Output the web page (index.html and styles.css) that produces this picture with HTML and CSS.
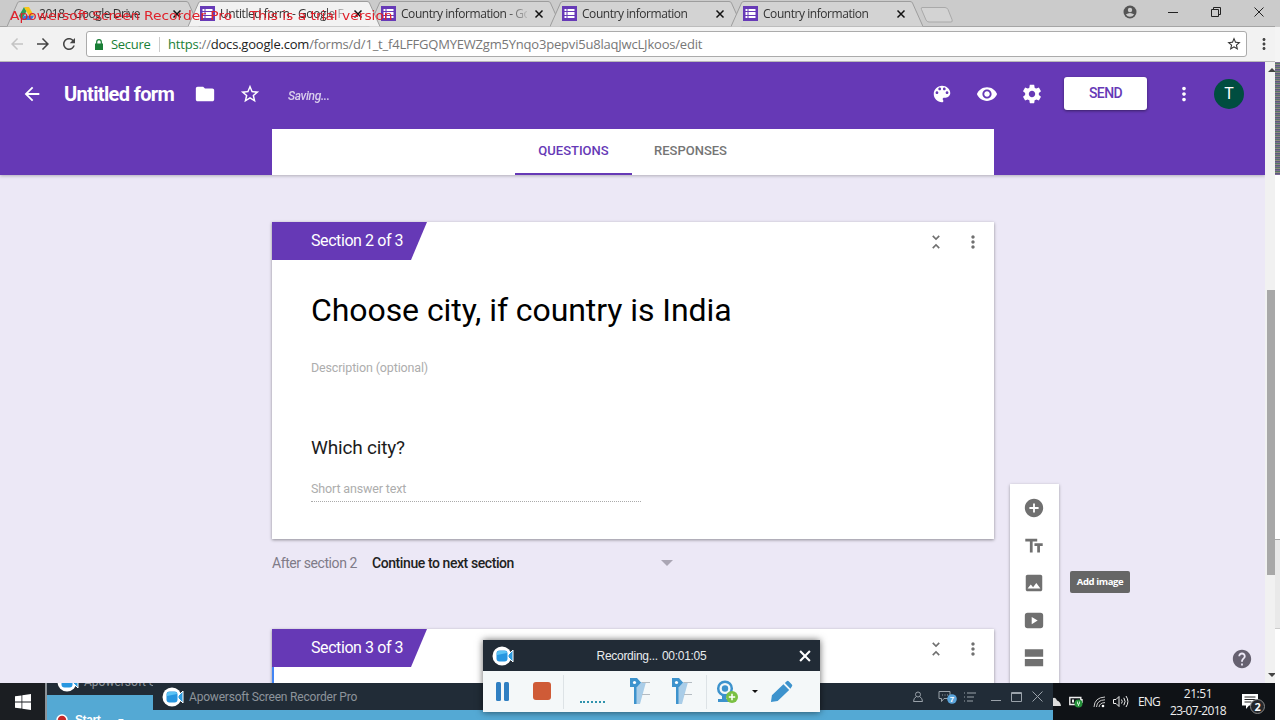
FILE: index.html
```html
<!DOCTYPE html>
<html lang="en">
<head>
<meta charset="utf-8">
<title>Untitled form</title>
<link rel="stylesheet" href="styles.css">
</head>
<body>
<svg class="defs">
	<symbol id="tab" viewBox="0 0 192 27"><path d="M0 26.5L10.5 3Q11 1.5 13 1.5H179Q181 1.5 181.5 3L192 26.5"/></symbol>
	<symbol id="form" viewBox="0 0 15 15"><path fill="#673ab7" d="M0 0h15v15H0z"/><path fill="#fff" d="M2.5 3h10v9h-10z"/><path stroke="#673ab7" d="M2 5.5h11M2 9.5h11M5 3v9"/></symbol>
	<symbol id="x" viewBox="0 0 10 10"><path d="M1.5 1.5l7 7M8.5 1.5l-7 7" fill="none" stroke="currentColor" stroke-width="1.5"/></symbol>
	<symbol id="star" viewBox="0 0 24 24"><path d="M22 9.24l-7.19-.62L12 2 9.19 8.63 2 9.24l5.46 4.73L5.82 21 12 17.27 18.18 21l-1.63-7.03L22 9.24zM12 15.4l-3.76 2.27 1-4.28-3.32-2.88 4.38-.38L12 6.1l1.71 4.04 4.38.38-3.32 2.88 1 4.28L12 15.4z"/></symbol>
	<symbol id="dots" viewBox="0 0 24 24"><path d="M12 8c1.1 0 2-.9 2-2s-.9-2-2-2-2 .9-2 2 .9 2 2 2zm0 2c-1.1 0-2 .9-2 2s.9 2 2 2 2-.9 2-2-.9-2-2-2zm0 6c-1.1 0-2 .9-2 2s.9 2 2 2 2-.9 2-2-.9-2-2-2z"/></symbol>
	<symbol id="arrow" viewBox="0 0 24 24"><path d="M20 11H7.83l5.59-5.59L12 4l-8 8 8 8 1.41-1.41L7.83 13H20v-2z"/></symbol>
	<symbol id="collapse" viewBox="0 0 24 24"><path d="M7.41 18.59L8.83 20 12 16.83 15.17 20l1.41-1.41L12 14l-4.59 4.59zm9.18-13.18L15.17 4 12 7.17 8.83 4 7.41 5.41 12 10l4.59-4.59z"/></symbol>
	<symbol id="cam" viewBox="0 0 22 20"><circle cx="10" cy="10" r="9.5" fill="#fff"/><path d="M16 9l5-5v12l-5-5z" fill="#2c9be0" stroke="#fff"/><rect x="4.5" y="4.5" width="11" height="11" rx="3" fill="#2796e0"/><path d="M5 9V7q0-2 2-2h6q2 0 2 2z" fill="#5bc3f5"/></symbol>
	<symbol id="pin" viewBox="0 0 22 28"><path d="M6 5h10L10 27H6z" fill="#a9cde8"/><path d="M12 5.5h8M12 17.5h8" stroke="#b4bcc2"/><path d="M0 1h7l4 4.5L7 10H0z" fill="#3d93cd"/><circle cx="4.5" cy="5.5" r="1.6" fill="#fff"/><path d="M4 10h2.5v17H4z" fill="#3d93cd"/></symbol>
</svg>

<div class="desk">
	<div class="browser">
		<div class="tabstrip">
			<div class="tab">
				<svg class="shape"><use href="#tab"/></svg>
				<svg class="fav" viewBox="0 0 15 15"><path fill="#2a9d58" d="M5 1l2.5 4.3L2.5 14 0 9.7z"/><path fill="#f5c518" d="M5 1h5l5 8.7h-5z"/><path fill="#3b78e0" d="M5 9.7h10L12.5 14h-10z"/></svg>
				<span class="label">2018 - Google Drive</span>
				<svg class="close"><use href="#x"/></svg>
			</div>
			<div class="tab active">
				<svg class="shape"><use href="#tab"/></svg>
				<svg class="fav"><use href="#form"/></svg>
				<span class="label">Untitled form - Google F</span>
				<svg class="close"><use href="#x"/></svg>
			</div>
			<div class="tab">
				<svg class="shape"><use href="#tab"/></svg>
				<svg class="fav"><use href="#form"/></svg>
				<span class="label">Country information - Go</span>
				<svg class="close"><use href="#x"/></svg>
			</div>
			<div class="tab">
				<svg class="shape"><use href="#tab"/></svg>
				<svg class="fav"><use href="#form"/></svg>
				<span class="label">Country information</span>
				<svg class="close"><use href="#x"/></svg>
			</div>
			<div class="tab">
				<svg class="shape"><use href="#tab"/></svg>
				<svg class="fav"><use href="#form"/></svg>
				<span class="label">Country information</span>
				<svg class="close"><use href="#x"/></svg>
			</div>
			<svg class="newtab" viewBox="0 0 34 18"><path d="M2 1.5h23q2 0 3 2l4 10q1 2.500-1 2.500H9q-2 0-3-2L1.500 3.500q-.8-2 .5-2z"/></svg>
			<div class="winbtns">
				<svg width="14" height="14" viewBox="0 0 14 14"><circle cx="7" cy="7" r="6.5" fill="#555"/><circle cx="7" cy="5" r="2.2" fill="#ccc"/><path d="M2.8 9.5q4.200-3.200 8.400 0-1.700 2.300-4.200 2.300t-4.200-2.300z" fill="#ccc"/></svg>
				<svg width="10" height="10" viewBox="0 0 10 10"><path d="M0 5.5h10" stroke="#222"/></svg>
				<svg width="10" height="10" viewBox="0 0 10 10"><path d="M.5 2.5h7v7h-7zM2.5 2.5v-2h7v7h-2" fill="none" stroke="#222"/></svg>
				<svg width="10" height="10" viewBox="0 0 10 10"><path d="M.5.5l9 9M9.5.5l-9 9" stroke="#222"/></svg>
			</div>
		</div>

		<div class="toolbar">
			<svg class="nav off"><use href="#arrow"/></svg>
			<svg class="nav fwd"><use href="#arrow"/></svg>
			<svg class="nav" viewBox="0 0 24 24"><path d="M17.65 6.35C16.2 4.9 14.21 4 12 4c-4.42 0-7.99 3.58-7.99 8s3.57 8 7.99 8c3.73 0 6.84-2.55 7.73-6h-2.08c-.82 2.33-3.04 4-5.65 4-3.31 0-6-2.69-6-6s2.69-6 6-6c1.66 0 3.14.69 4.22 1.78L13 11h7V4l-2.35 2.35z"/></svg>
			<div class="address">
				<svg class="lock" viewBox="0 0 8 11"><path d="M0 4.5h8V11H0z"/><path d="M1.7 5V3a2.3 2.3 0 0 1 4.6 0v2" fill="none" stroke="#1a7f37" stroke-width="1.2"/></svg>
				<span class="secure">Secure</span>
				<span class="url"><span class="scheme">https</span>://<b>docs.google.com</b>/forms/d/1_t_f4LFFGQMYEWZgm5Ynqo3pepvi5u8laqJwcLJkoos/edit</span>
				<svg class="fave"><use href="#star"/></svg>
			</div>
			<svg class="menu"><use href="#dots"/></svg>
		</div>

		<div class="view">
			<div class="page">
				<div class="head">
					<div class="bar">
						<svg class="icon back"><use href="#arrow"/></svg>
						<span class="name">Untitled form</span>
						<svg class="icon folder" viewBox="0 0 24 24"><path d="M10 4H4c-1.1 0-2 .9-2 2v12c0 1.1.9 2 2 2h16c1.1 0 2-.9 2-2V8c0-1.1-.9-2-2-2h-8l-2-2z"/></svg>
						<svg class="icon starred"><use href="#star"/></svg>
						<span class="saving">Saving...</span>
						<div class="actions">
							<svg class="icon" viewBox="0 0 24 24"><path d="M12 3c-4.97 0-9 4.03-9 9s4.03 9 9 9c.83 0 1.5-.67 1.5-1.5 0-.39-.15-.74-.39-1.01-.23-.26-.38-.61-.38-.99 0-.83.67-1.5 1.5-1.5H16c2.76 0 5-2.24 5-5 0-4.42-4.03-8-9-8zm-5.5 9c-.83 0-1.5-.67-1.5-1.5S5.67 9 6.5 9 8 9.67 8 10.5 7.33 12 6.5 12zm3-4C8.67 8 8 7.33 8 6.5S8.67 5 9.5 5s1.5.67 1.5 1.5S10.33 8 9.5 8zm5 0c-.83 0-1.5-.67-1.5-1.5S13.67 5 14.5 5s1.5.67 1.5 1.5S15.33 8 14.5 8zm3 4c-.83 0-1.5-.67-1.5-1.5S16.67 9 17.5 9s1.5.67 1.5 1.5-.67 1.5-1.5 1.5z"/></svg>
							<svg class="icon" viewBox="0 0 24 24"><path d="M12 4.5C7 4.5 2.73 7.61 1 12c1.73 4.39 6 7.5 11 7.5s9.27-3.11 11-7.5c-1.73-4.39-6-7.5-11-7.5zM12 17c-2.76 0-5-2.24-5-5s2.24-5 5-5 5 2.24 5 5-2.24 5-5 5zm0-8c-1.66 0-3 1.34-3 3s1.34 3 3 3 3-1.34 3-3-1.34-3-3-3z"/></svg>
							<svg class="icon" viewBox="0 0 24 24"><path d="M19.43 12.98c.04-.32.07-.64.07-.98s-.03-.66-.07-.98l2.11-1.65c.19-.15.24-.42.12-.64l-2-3.46c-.12-.22-.39-.3-.61-.22l-2.49 1c-.52-.4-1.08-.73-1.69-.98l-.38-2.65C14.46 2.18 14.25 2 14 2h-4c-.25 0-.46.18-.49.42l-.38 2.65c-.61.25-1.17.59-1.69.98l-2.49-1c-.23-.09-.49 0-.61.22l-2 3.46c-.13.22-.07.49.12.64l2.11 1.65c-.04.32-.07.65-.07.98s.03.66.07.98l-2.11 1.65c-.19.15-.24.42-.12.64l2 3.46c.12.22.39.3.61.22l2.49-1c.52.4 1.08.73 1.69.98l.38 2.65c.03.24.24.42.49.42h4c.25 0 .46-.18.49-.42l.38-2.65c.61-.25 1.17-.59 1.69-.98l2.49 1c.23.09.49 0 .61-.22l2-3.46c.12-.22.07-.49-.12-.64l-2.11-1.65zM12 15.5c-1.93 0-3.5-1.57-3.5-3.5s1.57-3.5 3.5-3.5 3.5 1.57 3.5 3.5-1.57 3.5-3.5 3.5z"/></svg>
							<span class="send">SEND</span>
							<svg class="icon more"><use href="#dots"/></svg>
							<span class="avatar">T</span>
						</div>
					</div>
					<div class="formtabs">
						<span class="on">QUESTIONS</span>
						<span>RESPONSES</span>
					</div>
				</div>

				<div class="column">
					<div class="card">
						<div class="cardhead">
							<div class="section"><span>Section 2 of 3</span></div>
							<svg class="cardicon"><use href="#collapse"/></svg>
							<svg class="cardicon"><use href="#dots"/></svg>
						</div>
						<div class="title">Choose city, if country is India</div>
						<div class="desc">Description (optional)</div>
						<div class="question">Which city?</div>
						<div class="answer">Short answer text</div>
					</div>
					<div class="after">
						<span class="afterlabel">After section 2</span>
						<span class="goto">Continue to next section</span>
						<i class="caret"></i>
					</div>
					<div class="card next">
						<div class="cardhead">
							<div class="section"><span>Section 3 of 3</span></div>
							<svg class="cardicon"><use href="#collapse"/></svg>
							<svg class="cardicon"><use href="#dots"/></svg>
						</div>
						<div class="selected"></div>
					</div>
				</div>

				<div class="tools">
					<svg viewBox="0 0 24 24"><path d="M12 2C6.48 2 2 6.48 2 12s4.48 10 10 10 10-4.48 10-10S17.52 2 12 2zm5 11h-4v4h-2v-4H7v-2h4V7h2v4h4v2z"/></svg>
					<svg viewBox="0 0 24 24"><path d="M2.5 4v3h5v12h3V7h5V4h-13zm19 5h-9v3h3v7h3v-7h3V9z"/></svg>
					<svg viewBox="0 0 24 24"><path d="M21 19V5c0-1.1-.9-2-2-2H5c-1.1 0-2 .9-2 2v14c0 1.1.9 2 2 2h14c1.1 0 2-.9 2-2zM8.5 13.5l2.5 3.01L14.5 12l4.5 6H5l3.5-4.5z"/></svg>
					<svg viewBox="0 0 24 24"><path d="M5 3h14q3 0 3 3v11q0 3-3 3H5q-3 0-3-3V6q0-3 3-3zm4.5 4.5v8l6.5-4z"/></svg>
					<svg viewBox="0 0 24 24"><path d="M2 2.5h20v8H2zM2 13h20v8H2z"/></svg>
				</div>
				<div class="tip">Add image</div>
				<svg class="help" viewBox="0 0 24 24"><path d="M12 2C6.48 2 2 6.48 2 12s4.48 10 10 10 10-4.48 10-10S17.52 2 12 2zm1 17h-2v-2h2v2zm2.07-7.75l-.9.92C13.45 12.9 13 13.5 13 15h-2v-.5c0-1.1.45-2.1 1.17-2.83l1.24-1.26c.37-.36.59-.86.59-1.41 0-1.1-.9-2-2-2s-2 .9-2 2H8c0-2.21 1.79-4 4-4s4 1.79 4 4c0 .88-.36 1.68-.93 2.25z"/></svg>
			</div>
			<div class="scroll">
				<i class="up"></i>
				<i class="thumb"></i>
				<i class="down"></i>
			</div>
		</div>
	</div>
	<div class="edge">
		<div class="edgetop"></div>
		<div class="noise"></div>
		<div class="sheet"></div>
		<div class="sheet grey"></div>
		<div class="sheet last"></div>
	</div>
</div>

<div class="taskbar">
	<div class="start">
		<svg width="16" height="16" viewBox="0 0 16 16" fill="#fff"><path d="M0 2.3L6.5 1.4v6.2H0zM7.3 1.3L16 0v7.6H7.3zM0 8.4h6.5v6.2L0 13.7zM7.3 8.4H16V16l-8.7-1.3z"/></svg>
	</div>
	<div class="app small">
		<div class="apptitle"><svg class="cam"><use href="#cam"/></svg><span>Apowersoft S</span></div>
		<div class="appbody"><svg width="12" height="12" viewBox="0 0 12 12"><circle cx="6" cy="6" r="5" fill="#c62828" stroke="#fff" stroke-width="1.5"/></svg><b>Start</b><i class="wcaret"></i></div>
	</div>
	<div class="app large">
		<div class="apptitle">
			<svg class="cam"><use href="#cam"/></svg><span>Apowersoft Screen Recorder Pro</span>
			<div class="appbtns">
				<svg width="10" height="12" viewBox="0 0 10 12"><circle cx="5" cy="3.5" r="2.5"/><path d="M3.5 5.5Q.5 7 .5 10.5h9Q9.5 7 6.5 5.5"/></svg>
				<svg width="20" height="14" viewBox="0 0 20 14"><path d="M1 1.5h11v7H6l-2.5 3v-3H1z"/><path d="M4 5h1M6.5 5h1M9 5h1"/><circle cx="14" cy="9" r="4.8" fill="#5aa5dc" stroke="none"/><text x="11.8" y="11.9" class="count">7</text></svg>
				<svg width="12" height="10" viewBox="0 0 12 10"><path d="M0 1h1M3 1h9M0 5h1M3 5h7M0 9h1M3 9h6"/></svg>
				<svg width="10" height="10" viewBox="0 0 10 10"><path d="M0 8.5h10"/></svg>
				<svg width="11" height="10" viewBox="0 0 11 10"><path d="M.5.5h10v9H.5zM.5 1.5h10"/></svg>
				<svg width="11" height="11" viewBox="0 0 11 11"><path d="M.5.5l10 10M10.5.5l-10 10"/></svg>
			</div>
		</div>
	</div>
	<div class="tray">
		<svg width="8" height="10" viewBox="0 0 8 10" fill="#ddd"><path d="M0 1q3-1 4 2.5Q7.5 4.5 8 9H0z"/></svg>
		<svg class="battery" width="14" height="13" viewBox="0 0 14 13"><path d="M.8 2.5h11v7H.8zM13 4v4" fill="none" stroke="#eee" stroke-width="1.4"/><path d="M3 4.5h2v3H3z" fill="#eee"/><circle cx="9.5" cy="8.5" r="4" fill="#26923b"/><path d="M8.5 6.5v2.5h2V6.5M9.5 9v2" fill="none" stroke="#bfe8c5"/></svg>
		<svg class="wifi" width="13" height="12" viewBox="0 0 13 12" fill="none" stroke="#ccc"><path d="M1 11Q1.5 1.5 12 1M3.5 11Q4 4 12 3.8M6 11Q6.5 6.8 12 6.6"/><circle cx="10" cy="10" r="1.3" fill="#fff" stroke="none"/></svg>
		<svg class="sound" width="16" height="13" viewBox="0 0 16 13" fill="none" stroke="#eee"><path d="M.5 4.5H3l3-3v10l-3-3H.5zM8.5 4.5q1.5 2 0 4M10.8 2.8q2.6 3.7 0 7.4M13 1q3.8 5.5 0 11"/></svg>
		<span class="lang">ENG</span>
		<div class="clock"><span class="time">21:51</span><span>23-07-2018</span></div>
		<svg class="notes" width="24" height="22" viewBox="0 0 24 22"><path d="M0 1h16v11.5H7L4 16v-3.5H0z" fill="#fff"/><path d="M2.5 4h11M2.5 6.5h11M2.5 9h7" stroke="#222"/><circle cx="15.5" cy="13.5" r="7" fill="#25272b" stroke="#888"/><text x="12.5" y="17.7" class="unread">2</text></svg>
	</div>
</div>

<div class="recorder">
	<div class="rectitle">
		<svg class="cam"><use href="#cam"/></svg>
		<span>Recording... 00:01:05</span>
		<svg class="recclose"><use href="#x"/></svg>
	</div>
	<div class="recbody">
		<svg class="pause" viewBox="0 0 14 19" fill="#2f7fc2"><rect width="5" height="19" rx="1.5"/><rect x="8" width="5" height="19" rx="1.5"/></svg>
		<i class="stop"></i>
		<i class="rule"></i>
		<i class="wave"></i>
		<svg class="pin"><use href="#pin"/></svg>
		<svg class="pin"><use href="#pin"/></svg>
		<i class="rule second"></i>
		<svg class="webcam" viewBox="0 0 24 24"><circle cx="10" cy="8.5" r="6.8" fill="none" stroke="#3d93cd" stroke-width="2.5"/><circle cx="10" cy="8.5" r="3.2" fill="#3d93cd"/><path d="M7 15h4v4h5v3H3v-3h4z" fill="#3d93cd"/><circle cx="17" cy="17" r="6" fill="#7ac043"/><path d="M17 13.8v6.4M13.8 17h6.4" stroke="#fff" stroke-width="1.5"/></svg>
		<i class="bcaret"></i>
		<svg class="pencil" viewBox="0 0 24 24" fill="#3d93cd"><path d="M1 23l1-7L14 4.5l6 6L8 22zM15.5 3l2-1.8q1-.9 2 0l3.3 3.5q1 1 0 2L21.3 9z"/></svg>
	</div>
</div>

<div class="watermark">Apowersoft Screen Recorder Pro &nbsp;&nbsp; This is a trial version</div>
</body>
</html>
```
FILE: styles.css
```css
html,body{
	margin:0;
	padding:0;
	width:1280px;
	height:720px;
	overflow:hidden;
	font-family:Roboto,"Liberation Sans",sans-serif;
	position:relative;
}
i{
	display:block;
	flex:none;
}
svg{
	display:block;
	flex:none;
}
.defs{
	position:absolute;
	width:0;
	height:0;
}
.desk{
	display:flex;
	height:683px;
}
.browser{
	width:1275px;
	display:flex;
	flex-direction:column;
}

/* tab strip */
.tabstrip{
	height:27px;
	box-sizing:border-box;
	padding-left:7px;
	display:flex;
	background:#cbcbcb;
	border-bottom:1px solid #a5a5a5;
}
.tab{
	position:relative;
	width:181px;
	height:27px;
	box-sizing:border-box;
	padding-left:12px;
	display:flex;
	align-items:center;
	flex:none;
	color:#333;
}
.tab .shape{
	position:absolute;
	left:0;
	top:0;
	width:192px;
	height:27px;
	fill:#d3d3d3;
	stroke:#9d9d9d;
}
.tab.active{
	z-index:1;
}
.tab.active .shape{
	fill:#f2f2f2;
}
.fav{
	position:relative;
	width:15px;
	height:15px;
}
.label{
	position:relative;
	margin-left:5px;
	width:126px;
	overflow:hidden;
	white-space:nowrap;
	font:12px/20px "Open Sans","Noto Sans",sans-serif;
	letter-spacing:-.45px;
	-webkit-mask-image:linear-gradient(90deg,#000 105px,transparent 130px);
	mask-image:linear-gradient(90deg,#000 105px,transparent 130px);
}
.close{
	position:relative;
	width:10px;
	height:10px;
	margin-left:7px;
	color:#111;
}
.newtab{
	width:34px;
	height:18px;
	margin:6px 0 0 8px;
	fill:#d3d3d3;
	stroke:#a9a9a9;
}
.winbtns{
	margin-left:auto;
	display:flex;
	align-items:center;
	gap:33px;
	padding-right:11px;
	height:24px;
}
.winbtns svg:first-child{
	margin-right:-2px;
}

/* address row */
.toolbar{
	height:35px;
	box-sizing:border-box;
	display:flex;
	align-items:center;
	background:#f2f2f2;
	border-bottom:1px solid #b9b9b9;
	padding-left:8px;
}
.nav{
	width:18px;
	height:18px;
	margin-right:8px;
	fill:#444;
}
.nav.off{
	fill:#c4c4c4;
}
.nav.fwd{
	transform:scaleX(-1);
}
.address{
	width:1161px;
	height:26px;
	box-sizing:border-box;
	border:1px solid #ababab;
	border-radius:3px;
	background:#fff;
	display:flex;
	align-items:center;
	padding:0 4px 0 8px;
	font:13px/24px "Open Sans","Noto Sans",sans-serif;
}
.lock{
	width:8px;
	height:11px;
	fill:#1a7f37;
}
.secure{
	margin-left:8px;
	width:48px;
	color:#1a7f37;
	letter-spacing:-.3px;
}
.url{
	height:15px;
	line-height:15px;
	border-left:1px solid #ccc;
	padding-left:8px;
	color:#777;
	letter-spacing:-.2px;
	white-space:nowrap;
}
.scheme{
	color:#1a7f37;
}
.url b{
	font-weight:400;
	color:#222;
}
.fave{
	width:16px;
	height:16px;
	margin-left:auto;
	fill:#333;
}
.menu{
	width:18px;
	height:18px;
	margin-left:8px;
	fill:#444;
}

/* google forms page */
.view{
	height:621px;
	display:flex;
}
.page{
	position:relative;
	width:1265px;
	height:621px;
	overflow:hidden;
	background:#ece8f6;
}
.head{
	height:113px;
	background:#6639b6;
	box-shadow:0 1px 3px rgba(0,0,0,.25);
}
.bar{
	height:67px;
	box-sizing:border-box;
	padding:0 21px 4px;
	display:flex;
	align-items:center;
	color:#fff;
}
.icon{
	width:22px;
	height:22px;
	fill:#fff;
}
.name{
	margin-left:21px;
	width:110px;
	font-size:20px;
	font-weight:700;
	letter-spacing:-.65px;
	white-space:nowrap;
	padding-top:1px;
}
.folder{
	margin-left:20px;
}
.starred{
	margin-left:23px;
}
.saving{
	margin:4px 0 0 27px;
	font-size:12px;
	font-weight:500;
	font-style:italic;
	letter-spacing:-.35px;
	opacity:.75;
}
.actions{
	margin-left:auto;
	display:flex;
	align-items:center;
	gap:23px;
}
.send{
	width:83px;
	height:33px;
	margin-left:-2px;
	border-radius:3px;
	background:#fff;
	box-shadow:0 1px 3px rgba(0,0,0,.45);
	color:#6639b6;
	font-size:14px;
	font-weight:500;
	letter-spacing:-.6px;
	line-height:33px;
	text-align:center;
}
.more{
	margin-left:3px;
}
.avatar{
	width:30px;
	height:30px;
	margin-left:-4px;
	border-radius:50%;
	background:#004d40;
	font-size:16px;
	line-height:30px;
	text-align:center;
}
.formtabs{
	width:722px;
	height:46px;
	margin-left:272px;
	background:#fff;
	display:flex;
	justify-content:center;
	box-sizing:border-box;
	padding-right:2px;
}
.formtabs span{
	width:117px;
	box-sizing:border-box;
	border-bottom:2px solid transparent;
	color:#757575;
	font-size:13px;
	font-weight:500;
	line-height:44px;
	text-align:center;
}
.formtabs .on{
	color:#6639b6;
	border-bottom-color:#6639b6;
}
.column{
	width:722px;
	margin-left:272px;
	padding-top:47px;
}
.card{
	height:317px;
	background:#fff;
	box-shadow:0 1px 3px rgba(0,0,0,.4);
}
.cardhead{
	height:38px;
	display:flex;
	align-items:center;
	padding-right:11px;
}
.section{
	width:155px;
	height:38px;
	margin-right:auto;
	background:#6639b6;
	clip-path:polygon(0 0,100% 0,139px 100%,0 100%);
	color:#fff;
	font-size:16px;
	letter-spacing:-.42px;
	line-height:37px;
	white-space:nowrap;
}
.section span{
	margin-left:39px;
}
.cardicon{
	width:20px;
	height:20px;
	margin:1px 0 0 17px;
	fill:#707070;
}
.title{
	margin:28px 39px 0;
	font-size:32px;
	letter-spacing:-.07px;
	line-height:44px;
	white-space:nowrap;
}
.desc{
	margin:26px 39px 0;
	font-size:12.5px;
	letter-spacing:-.14px;
	line-height:20px;
	color:#adadad;
}
.question{
	margin:56px 39px 0;
	font-size:19px;
	letter-spacing:-.18px;
	line-height:28px;
	color:#1c1c1c;
}
.answer{
	width:330px;
	height:23px;
	margin:16px 39px 0;
	border-bottom:1px dotted #aaa;
	font-size:12.5px;
	letter-spacing:-.14px;
	line-height:22px;
	color:#adadad;
}
.after{
	height:90px;
	box-sizing:border-box;
	padding-top:14px;
	display:flex;
	font-size:14px;
	letter-spacing:-.42px;
	line-height:20px;
}
.afterlabel{
	width:100px;
	color:#7f7b88;
}
.goto{
	width:289px;
	color:#222;
	font-weight:500;
}
.caret{
	width:0;
	height:0;
	margin-top:7px;
	border:6px solid transparent;
	border-top-color:#aaa6b4;
	border-bottom:0;
}
.selected{
	width:2px;
	height:30px;
	background:#4285f4;
}
.tools{
	position:absolute;
	left:1010px;
	top:422px;
	width:49px;
	height:210px;
	box-sizing:border-box;
	padding:13px 1px 0 0;
	display:flex;
	flex-direction:column;
	align-items:center;
	gap:15.5px;
	background:#fff;
	box-shadow:0 1px 3px rgba(0,0,0,.35);
}
.tools svg{
	width:22px;
	height:22px;
	fill:#707070;
	fill-rule:evenodd;
}
.tip{
	position:absolute;
	left:1070px;
	top:509px;
	width:60px;
	height:22px;
	border-radius:2px;
	background:#666;
	color:#fff;
	font:700 9.5px/21px "Open Sans",sans-serif;
	letter-spacing:-.4px;
	text-align:center;
}
.help{
	position:absolute;
	left:1231px;
	top:586px;
	width:22px;
	height:22px;
	fill:#666170;
}
.scroll{
	width:10px;
	height:621px;
	box-sizing:border-box;
	padding:6px 0;
	background:#f1f1f1;
	display:flex;
	flex-direction:column;
	align-items:flex-end;
	overflow:hidden;
}
.up,.down{
	width:0;
	height:0;
	margin-right:-1px;
	border:4px solid transparent;
}
.up{
	border-top:0;
	border-bottom-color:#444;
}
.down{
	margin-top:auto;
	border-bottom:0;
	border-top-color:#444;
}
.thumb{
	width:8px;
	height:285px;
	margin-top:218px;
	background:#a8a8a8;
}

/* strip of the windows behind the browser */
.edge{
	width:5px;
	background:#fff;
}
.edgetop{
	height:62px;
	background:linear-gradient(#cbcbcb 27px,#f4f4f4 27px);
}
.noise{
	height:113px;
	background:repeating-linear-gradient(#7d6a94 0 1px,#557a62 1px 2px,#8f8a7c 2px 3px,#5b5980 3px 4px);
}
.sheet{
	height:364px;
	border-bottom:1px solid #aaa;
	background:#fff;
}
.sheet.grey{
	height:88px;
	background:#e9e9e9;
	border-color:#ccc;
}
.sheet.last{
	height:54px;
	border:0;
}

/* windows taskbar with the app windows over it */
.taskbar{
	height:37px;
	width:1275px;
	display:flex;
	background:#0f1216;
	overflow:hidden;
}
.start{
	width:45px;
	border-right:2px solid #8c9297;
	background:#1b1e22;
	display:flex;
	align-items:center;
	justify-content:center;
}
.app{
	background:#54a9d4;
	overflow:hidden;
	font-size:12px;
}
.apptitle{
	display:flex;
	align-items:center;
	background:#212c37;
	color:#8d949b;
	white-space:nowrap;
}
.cam{
	width:22px;
	height:20px;
}
.small{
	width:106px;
}
.small .apptitle{
	height:12px;
	padding-left:10px;
	overflow:hidden;
}
.small .cam{
	margin-top:-14px;
}
.small span{
	margin:-14px 0 0 5px;
}
.appbody{
	display:flex;
	align-items:center;
	padding:19px 0 0 9px;
	height:12px;
	color:#fff;
	font-family:"Liberation Sans",sans-serif;
}
.appbody b{
	margin-left:7px;
	letter-spacing:-.4px;
}
.wcaret{
	margin-left:18px;
	border:3px solid transparent;
	border-top-color:#fff;
	border-bottom:0;
}
.large{
	width:900px;
}
.large .apptitle{
	height:27px;
	padding-left:9px;
}
.large .apptitle span{
	margin-left:5px;
	letter-spacing:-.2px;
}
.appbtns{
	margin-left:auto;
	display:flex;
	align-items:center;
	gap:10px;
	padding-right:10px;
	fill:none;
	stroke:#9aa2aa;
}
.appbtns svg:nth-child(2){
	margin-left:5px;
	margin-right:-4px;
}
.appbtns svg:nth-child(3){
	margin-right:5px;
}
.count{
	font:700 8px "Liberation Sans",sans-serif;
	fill:#fff;
	stroke:none;
}
.tray{
	flex:1;
	display:flex;
	align-items:center;
	color:#eee;
	font:12px/17px "Open Sans","Noto Sans",sans-serif;
}
.battery{
	margin-left:8px;
}
.wifi{
	margin-left:10px;
}
.sound{
	margin-left:7px;
}
.lang{
	width:22px;
	margin-left:9px;
	letter-spacing:-.9px;
}
.clock{
	width:56px;
	margin-left:10px;
	display:flex;
	flex-direction:column;
	align-items:center;
	letter-spacing:-.65px;
	white-space:nowrap;
}
.time{
	letter-spacing:-.4px;
}
.notes{
	margin:4px 0 0 16px;
}
.unread{
	font:700 11px "Open Sans",sans-serif;
	fill:#fff;
}

/* floating recorder panel */
.recorder{
	position:absolute;
	left:483px;
	top:640px;
	width:337px;
	height:72px;
	background:#f4f8f9;
	box-shadow:0 0 7px rgba(0,0,0,.6);
	z-index:2;
}
.rectitle{
	height:31px;
	padding:0 8px 0 9px;
	display:flex;
	align-items:center;
	justify-content:space-between;
	background:#212b36;
	color:#e9ecee;
	font:12px "Liberation Sans",sans-serif;
}
.rectitle span{
	margin-left:-10px;
	letter-spacing:-.28px;
	font-size:12px;
	width:109px;
	white-space:nowrap;
	word-spacing:1px;
}
.recclose{
	width:14px;
	height:14px;
	color:#fff;
}
.recbody{
	height:41px;
	display:flex;
	align-items:center;
}
.pause{
	width:14px;
	height:19px;
	margin:-1px 0 0 13px;
}
.stop{
	width:18px;
	height:18px;
	margin:-1px 0 0 23px;
	border-radius:3px;
	background:#cf5b37;
}
.rule{
	width:1px;
	height:34px;
	margin-left:12px;
	background:#dde3e6;
}
.wave{
	width:25px;
	margin:20px 0 0 16px;
	border-top:2px dotted #2f93ad;
}
.pin{
	width:22px;
	height:28px;
	margin:-2px 0 0 25px;
}
.pin + .pin{
	margin-left:20px;
}
.second{
	margin-left:12px;
}
.webcam{
	width:24px;
	height:24px;
	margin-left:8px;
}
.bcaret{
	margin-left:13px;
	border:3px solid transparent;
	border-top-color:#111;
	border-bottom:0;
}
.pencil{
	width:23px;
	height:23px;
	margin-left:12px;
}
.watermark{
	position:absolute;
	left:10px;
	top:8px;
	z-index:3;
	color:#e0202a;
	font:12px/16px "DejaVu Sans",sans-serif;
	white-space:nowrap;
	transform:scaleX(1.15);
	transform-origin:0 0;
}
```
